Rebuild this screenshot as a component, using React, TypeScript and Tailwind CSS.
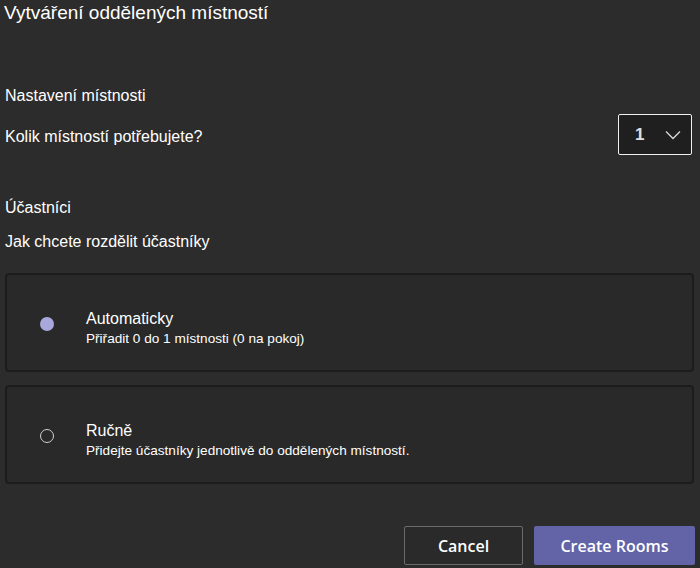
import React from 'react';

const options = [
  {
    title: 'Automaticky',
    description: 'Přiřadit 0 do 1 místnosti (0 na pokoj)',
    selected: true,
  },
  {
    title: 'Ručně',
    description: 'Přidejte účastníky jednotlivě do oddělených místností.',
    selected: false,
  },
];

function App() {
  return (
    <div
      className="w-[700px] h-[568px] bg-[#2d2c2c] text-white overflow-hidden flex flex-col"
      style={{ fontFamily: '"Liberation Sans", Arial, sans-serif' }}
    >
      <h1 className="text-[19px] leading-[22px] mt-[2px] ml-[4px]">Vytváření oddělených místností</h1>

      <p className="text-[16px] leading-[18px] mt-[63px] ml-[5px]">Nastavení místnosti</p>

      <div className="flex items-center justify-between mt-[9px] ml-[5px] mr-[8px]">
        <span className="text-[16px] leading-[18px] mt-[5px]">Kolik místností potřebujete?</span>
        <button className="w-[74px] h-[41px] bg-[#1f1f1f] border-[1.5px] border-[#f0f0f0] rounded-[2px] flex items-center justify-between pl-[16px] pr-[10px]">
          <span className="text-[17px] font-bold text-[#e0e0e0]">1</span>
          <svg width="16" height="10" viewBox="0 0 16 10" fill="none">
            <path d="M1 1.5 L8 8.5 L15 1.5" stroke="#d8d8d8" strokeWidth="1.3" />
          </svg>
        </button>
      </div>

      <p className="text-[16px] leading-[18px] mt-[44px] ml-[5px]">Účastníci</p>
      <p className="text-[16px] leading-[18px] mt-[16px] ml-[5px]">Jak chcete rozdělit účastníky</p>

      <div className="flex flex-col gap-[13px] mt-[22px] ml-[5px] mr-[6px]">
        {options.map((o) => (
          <div
            key={o.title}
            className="h-[99px] bg-[#292929] border-2 border-[#1c1c1c] rounded-[4px] flex items-center"
          >
            <div className="w-[79px] flex justify-center pt-[2px]">
              {o.selected ? (
                <div className="w-[14px] h-[14px] rounded-full bg-[#a9a8dc]" />
              ) : (
                <div className="w-[14px] h-[14px] rounded-full border-[1.5px] border-[#d0d0d0]" />
              )}
            </div>
            <div className="flex flex-col mt-[11px]">
              <span className="text-[16px] leading-[19px]">{o.title}</span>
              <span className="text-[13.6px] leading-[16px] mt-[3px]">{o.description}</span>
            </div>
          </div>
        ))}
      </div>

      <div
        className="flex justify-end gap-[11px] mt-[42px] mr-[5px]"
        style={{ fontFamily: '"Open Sans", "Noto Sans", sans-serif' }}
      >
        <button className="w-[119px] h-[39px] border border-[#6b6b6b] bg-[#2a2a2a] rounded-[2px] text-[16px] font-semibold text-white">
          Cancel
        </button>
        <button className="w-[161px] h-[39px] bg-[#6264a7] rounded-[2px] text-[16px] font-semibold text-white">
          Create Rooms
        </button>
      </div>
    </div>
  );
}

export default App;
